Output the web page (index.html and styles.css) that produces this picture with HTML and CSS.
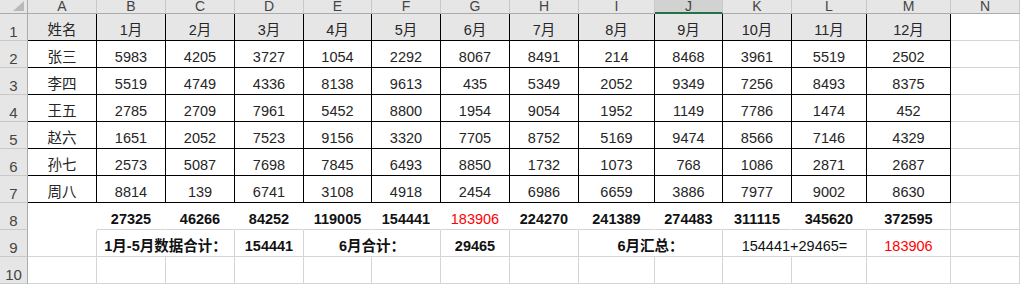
FILE: index.html
```html
<!DOCTYPE html>
<html lang="zh-CN">
<head>
<meta charset="utf-8">
<title>Sheet</title>
<link rel="stylesheet" href="styles.css">
</head>
<body>
<div class="sheet">
  <div class="corner"><span class="tri"></span></div>
  <div class="ch">A</div><div class="ch">B</div><div class="ch">C</div><div class="ch">D</div><div class="ch">E</div><div class="ch">F</div><div class="ch">G</div><div class="ch">H</div><div class="ch">I</div><div class="ch sel">J</div><div class="ch">K</div><div class="ch">L</div><div class="ch">M</div><div class="ch">N</div>

  <div class="rh">1</div>
  <div class="c t hd">姓名</div><div class="c t hd">1月</div><div class="c t hd">2月</div><div class="c t hd">3月</div><div class="c t hd">4月</div><div class="c t hd">5月</div><div class="c t hd">6月</div><div class="c t hd">7月</div><div class="c t hd">8月</div><div class="c t hd">9月</div><div class="c t hd">10月</div><div class="c t hd">11月</div><div class="c t hd">12月</div><div class="c"></div>

  <div class="rh">2</div>
  <div class="c t">张三</div><div class="c t">5983</div><div class="c t">4205</div><div class="c t">3727</div><div class="c t">1054</div><div class="c t">2292</div><div class="c t">8067</div><div class="c t">8491</div><div class="c t">214</div><div class="c t">8468</div><div class="c t">3961</div><div class="c t">5519</div><div class="c t">2502</div><div class="c"></div>

  <div class="rh">3</div>
  <div class="c t">李四</div><div class="c t">5519</div><div class="c t">4749</div><div class="c t">4336</div><div class="c t">8138</div><div class="c t">9613</div><div class="c t">435</div><div class="c t">5349</div><div class="c t">2052</div><div class="c t">9349</div><div class="c t">7256</div><div class="c t">8493</div><div class="c t">8375</div><div class="c"></div>

  <div class="rh">4</div>
  <div class="c t">王五</div><div class="c t">2785</div><div class="c t">2709</div><div class="c t">7961</div><div class="c t">5452</div><div class="c t">8800</div><div class="c t">1954</div><div class="c t">9054</div><div class="c t">1952</div><div class="c t">1149</div><div class="c t">7786</div><div class="c t">1474</div><div class="c t">452</div><div class="c"></div>

  <div class="rh">5</div>
  <div class="c t">赵六</div><div class="c t">1651</div><div class="c t">2052</div><div class="c t">7523</div><div class="c t">9156</div><div class="c t">3320</div><div class="c t">7705</div><div class="c t">8752</div><div class="c t">5169</div><div class="c t">9474</div><div class="c t">8566</div><div class="c t">7146</div><div class="c t">4329</div><div class="c"></div>

  <div class="rh">6</div>
  <div class="c t">孙七</div><div class="c t">2573</div><div class="c t">5087</div><div class="c t">7698</div><div class="c t">7845</div><div class="c t">6493</div><div class="c t">8850</div><div class="c t">1732</div><div class="c t">1073</div><div class="c t">768</div><div class="c t">1086</div><div class="c t">2871</div><div class="c t">2687</div><div class="c"></div>

  <div class="rh">7</div>
  <div class="c t">周八</div><div class="c t">8814</div><div class="c t">139</div><div class="c t">6741</div><div class="c t">3108</div><div class="c t">4918</div><div class="c t">2454</div><div class="c t">6986</div><div class="c t">6659</div><div class="c t">3886</div><div class="c t">7977</div><div class="c t">9002</div><div class="c t">8630</div><div class="c"></div>

  <div class="rh">8</div>
  <div class="c r8a"></div><div class="c r8 b">27325</div><div class="c r8 b">46266</div><div class="c r8 b">84252</div><div class="c r8 b">119005</div><div class="c r8 b">154441</div><div class="c r8 red">183906</div><div class="c r8 b">224270</div><div class="c r8 b">241389</div><div class="c r8 b">274483</div><div class="c r8 b">311115</div><div class="c r8 b">345620</div><div class="c r8 r8m b">372595</div><div class="c"></div>

  <div class="rh">9</div>
  <div class="c"></div><div class="c b span2">1月-5月数据合计：</div><div class="c b">154441</div><div class="c b span2">6月合计：</div><div class="c b">29465</div><div class="c"></div><div class="c b span2">6月汇总：</div><div class="c span2 eq">154441+29465=</div><div class="c red">183906</div><div class="c"></div>

  <div class="rh">10</div>
  <div class="c"></div><div class="c"></div><div class="c"></div><div class="c"></div><div class="c"></div><div class="c"></div><div class="c"></div><div class="c"></div><div class="c"></div><div class="c"></div><div class="c"></div><div class="c"></div><div class="c"></div><div class="c"></div>
</div>
</body>
</html>
```

FILE: styles.css
```css
html, body {
  margin: 0;
  padding: 0;
  background: #ffffff;
}

.sheet {
  display: grid;
  grid-template-columns: 28px 69px 69px 69px 69px 68px 69px 69px 69px 76px 68px 69px 75px 84px 69px;
  grid-template-rows: 14px repeat(10, 27px);
  font-family: "Liberation Sans", "Noto Sans CJK SC", sans-serif;
  font-size: 14.5px;
  color: #262626;
}

.sheet > div {
  box-sizing: border-box;
}

.corner {
  position: relative;
  background: #e6e6e6;
  border-right: 1px solid #ababab;
  border-bottom: 1px solid #ababab;
}

.tri {
  position: absolute;
  right: 3px;
  bottom: 2px;
  width: 0;
  height: 0;
  border-left: 11px solid transparent;
  border-bottom: 10px solid #b9b9b9;
}

.ch {
  background: #e6e6e6;
  border-right: 1px solid #c9c9c9;
  border-bottom: 1px solid #ababab;
  color: #444;
  font-size: 14px;
  line-height: 13px;
  text-align: center;
}

.ch.sel {
  background: #d2d2d2;
  border-bottom: 2px solid #217346;
  line-height: 12px;
}

.rh {
  background: #e6e6e6;
  border-right: 1px solid #ababab;
  border-bottom: 1px solid #c9c9c9;
  color: #444;
  font-size: 15px;
  line-height: 14px;
  display: flex;
  align-items: flex-end;
  justify-content: center;
  padding-bottom: 1px;
}

.c {
  display: flex;
  align-items: flex-end;
  justify-content: center;
  line-height: 17px;
  padding-bottom: 1px;
  border-right: 1px solid #d4d4d4;
  border-bottom: 1px solid #d4d4d4;
  white-space: nowrap;
}

.c.t {
  border-right-color: #000;
  border-bottom-color: #000;
}

.c.hd {
  background: #e7e6e6;
}

.c.r8a {
  border-right-color: transparent;
  border-bottom-color: transparent;
}

.c.r8 {
  border-right-color: transparent;
}

.c.r8m {
  border-right-color: #d4d4d4;
}

.span2 {
  grid-column: span 2;
}

.b {
  font-weight: bold;
  color: #111;
}

.eq {
  color: #111;
}

.red {
  color: #ff0000;
}
```
